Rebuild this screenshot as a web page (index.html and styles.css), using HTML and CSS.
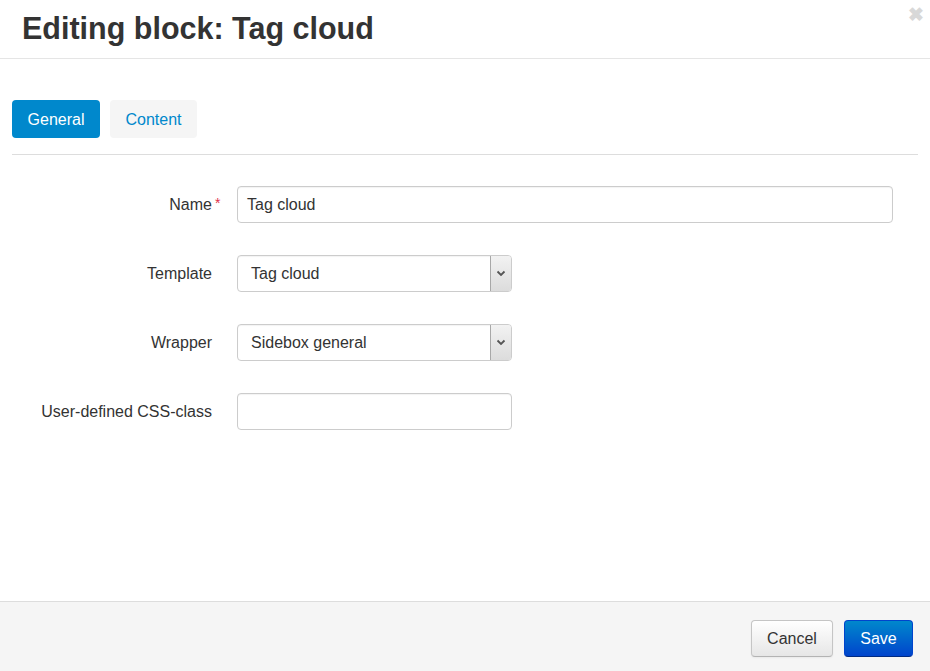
FILE: index.html
```html
<!DOCTYPE html>
<html>
<head>
<meta charset="utf-8">
<link rel="stylesheet" href="styles.css">
</head>
<body>
<div class="modal">
  <header class="modal-header">
    <h1 class="title">Editing block: Tag cloud</h1>
    <span class="close">&#10006;</span>
  </header>
  <main class="modal-body">
    <nav class="tabs">
      <span class="tab active">General</span>
      <span class="tab">Content</span>
    </nav>
    <form class="form">
      <div class="row">
        <label class="label"><span class="req">Name</span></label>
        <div class="field wide"><span class="value">Tag cloud</span></div>
      </div>
      <div class="row">
        <label class="label">Template</label>
        <div class="field select"><span class="value">Tag cloud</span><span class="arrow"><svg width="10" height="7" viewBox="0 0 10 7"><path d="M1.5 1.5 L5 5 L8.5 1.5" fill="none" stroke="#555" stroke-width="1.8"/></svg></span></div>
      </div>
      <div class="row">
        <label class="label">Wrapper</label>
        <div class="field select"><span class="value">Sidebox general</span><span class="arrow"><svg width="10" height="7" viewBox="0 0 10 7"><path d="M1.5 1.5 L5 5 L8.5 1.5" fill="none" stroke="#555" stroke-width="1.8"/></svg></span></div>
      </div>
      <div class="row">
        <label class="label">User-defined CSS-class</label>
        <div class="field short"></div>
      </div>
    </form>
  </main>
  <footer class="modal-footer">
    <button class="btn btn-default">Cancel</button>
    <button class="btn btn-primary">Save</button>
  </footer>
</div>
</body>
</html>
```
FILE: styles.css
```css
html, body {
  margin: 0;
  padding: 0;
  background: #fff;
}
body {
  font-family: "Liberation Sans", Arial, sans-serif;
  color: #333;
}
.modal {
  display: flex;
  flex-direction: column;
  height: 671px;
}
.modal-header {
  position: relative;
  height: 58px;
  border-bottom: 1px solid #e5e5e5;
  box-sizing: content-box;
}
.title {
  margin: 0;
  padding: 8px 0 0 22px;
  font-size: 30.5px;
  line-height: 40px;
  font-weight: bold;
  color: #333;
}
.close {
  position: absolute;
  top: 3px;
  right: 6px;
  font-size: 19px;
  color: #d8d8d8;
  font-weight: bold;
}
.modal-body {
  flex: 1;
  padding: 41px 12px 0 12px;
}
.tabs {
  display: flex;
  gap: 10px;
  padding-bottom: 16px;
  border-bottom: 1px solid #ddd;
}
.tab {
  display: inline-flex;
  align-items: center;
  justify-content: center;
  height: 38px;
  width: 87px;
  padding-top: 1px;
  box-sizing: border-box;
  border-radius: 4px;
  font-size: 16px;
  background: #f5f5f5;
  color: #0088cc;
}
.tab.active {
  width: 88px;
  background: #0088cc;
  color: #fff;
}
.form {
  display: flex;
  flex-direction: column;
  gap: 32px;
  padding-top: 31px;
}
.row {
  display: flex;
  align-items: center;
  gap: 25px;
}
.label {
  width: 200px;
  text-align: right;
  font-size: 16px;
  color: #333;
}
.req {
  position: relative;
}
.req::after {
  content: "*";
  position: absolute;
  left: calc(100% + 3px);
  top: -1px;
  color: #e0304a;
  font-size: 14px;
}
.field {
  display: flex;
  align-items: center;
  height: 37px;
  box-sizing: border-box;
  border: 1px solid #ccc;
  border-radius: 4px;
  background: #fff;
  font-size: 16px;
  color: #333;
  box-shadow: inset 0 1px 1px rgba(0,0,0,0.05);
}
.field.wide {
  width: 656px;
  padding-left: 9px;
}
.field.short {
  width: 275px;
}
.field.select {
  width: 275px;
  padding-left: 13px;
  justify-content: space-between;
  overflow: hidden;
}
.arrow {
  align-self: stretch;
  width: 20px;
  display: flex;
  align-items: center;
  justify-content: center;
  background: linear-gradient(#f2f2f2, #dcdcdc);
  border-left: 1px solid #a8a8a8;
}
.modal-footer {
  display: flex;
  justify-content: flex-end;
  align-items: center;
  gap: 11px;
  height: 69px;
  padding: 0 17px 0 0;
  background: #f5f5f5;
  border-top: 1px solid #ddd;
}
.btn {
  height: 37px;
  border-radius: 4px;
  font-family: "Liberation Sans", Arial, sans-serif;
  font-size: 16px;
  padding: 0 15px;
  margin-top: 4px;
  cursor: pointer;
}
.btn-default {
  width: 82px;
  color: #333;
  background: linear-gradient(#ffffff, #e6e6e6);
  border: 1px solid #c5c5c5;
  border-bottom-color: #b3b3b3;
  box-shadow: inset 0 1px 0 rgba(255,255,255,0.2), 0 1px 2px rgba(0,0,0,0.05);
}
.btn-primary {
  width: 69px;
  color: #fff;
  background: linear-gradient(#0088cc, #0044cc);
  border: 1px solid #0044cc;
  border-bottom-color: #002a80;
}
```
